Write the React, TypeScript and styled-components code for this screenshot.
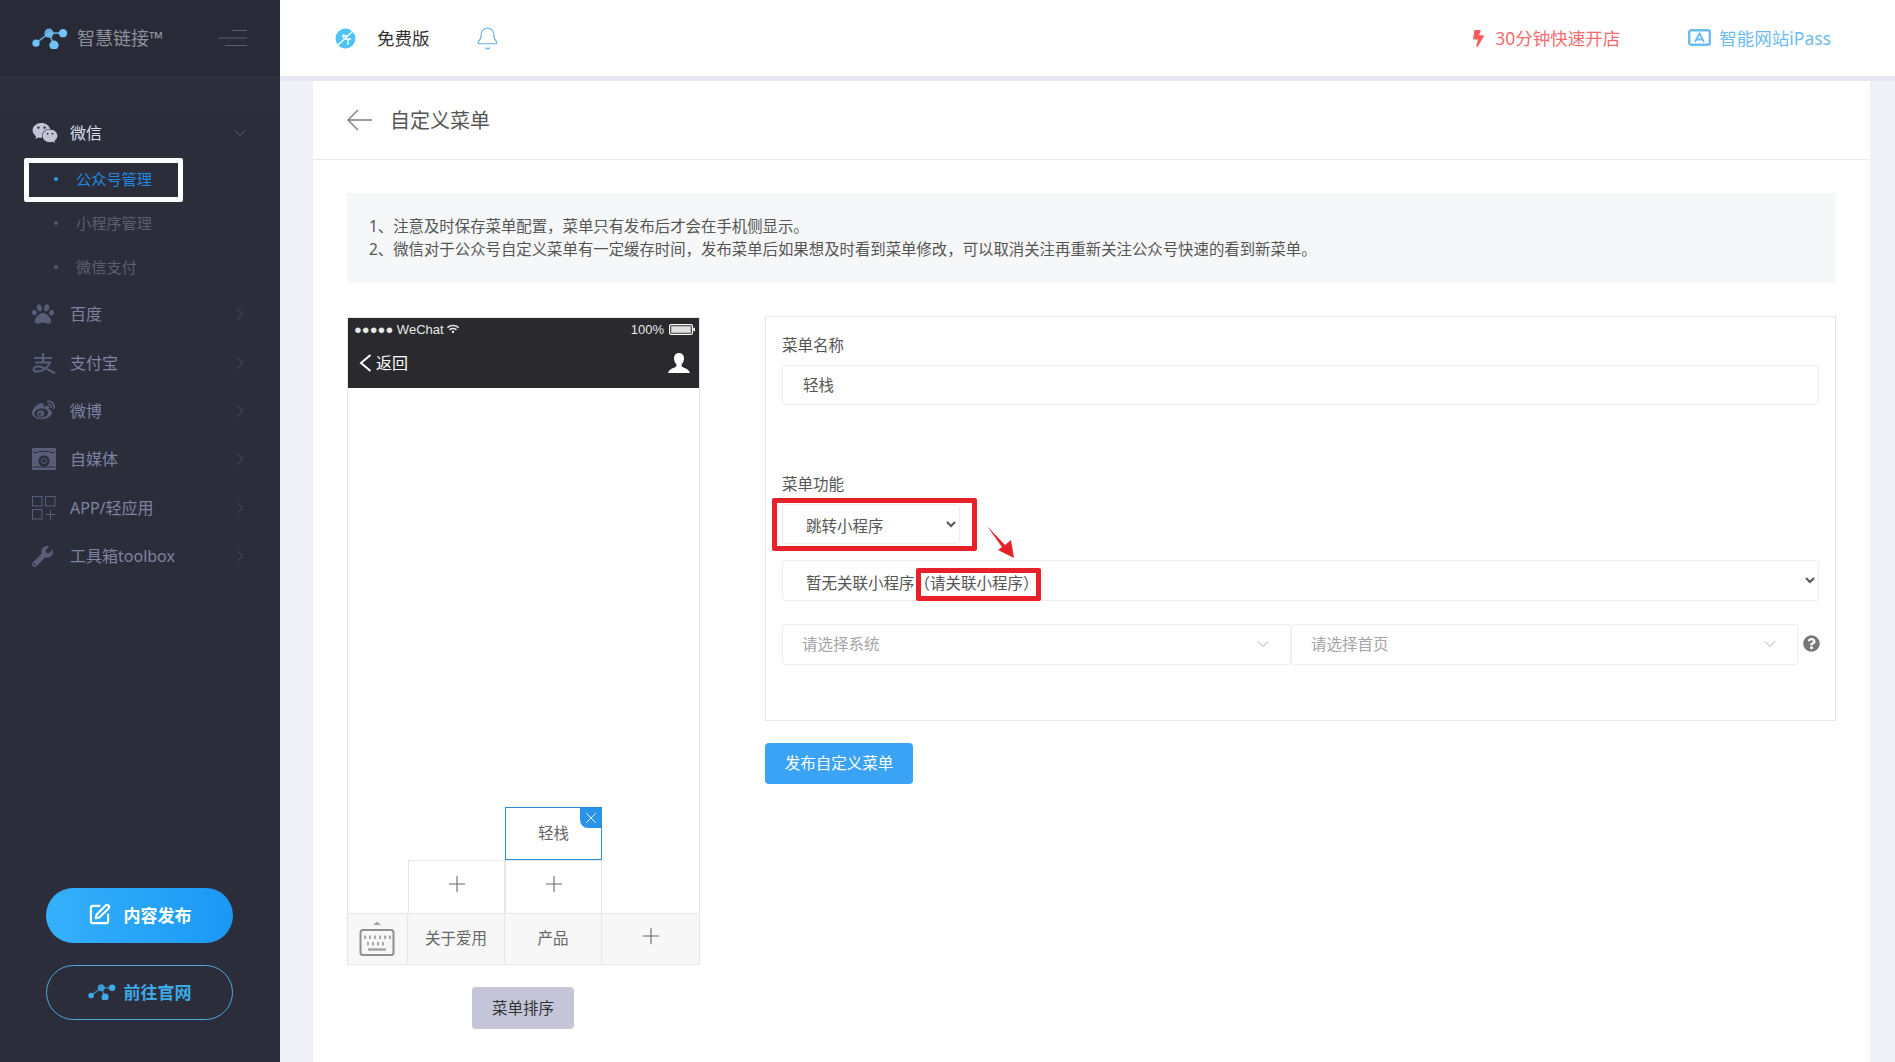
import styled, { createGlobalStyle } from 'styled-components';
import { Bell, ChevronDown, ChevronRight, Plus, SquarePen, X } from 'lucide-react';
import { FaBolt, FaPaw, FaQuestionCircle, FaWeibo, FaWeixin, FaWifi, FaWrench } from 'react-icons/fa';

const FONT = '"Noto Sans", "Noto Sans CJK SC", sans-serif';

const GlobalStyle = createGlobalStyle`
  html, body {
    margin: 0;
    padding: 0;
    height: 100%;
    overflow: hidden;
    font-family: ${FONT};
  }
  * { box-sizing: border-box; }
`;

const LogoMark = ({ color = '#6fc3f7', size = 36 }: { color?: string; size?: number }) => (
  <svg width={size} height={size * 0.62} viewBox="0 0 36 22" fill={color}>
    <path d="M4 16 L17 6 H30 M17 6 L22 18" stroke={color} strokeWidth="1.6" fill="none" opacity="0.8" />
    <circle cx="4" cy="16" r="3.6" />
    <circle cx="17" cy="6" r="4.6" opacity="0.85" />
    <circle cx="31" cy="6" r="4.2" />
    <circle cx="22" cy="18" r="4.6" />
  </svg>
);

const AlipayIcon = () => (
  <svg width="24" height="22" viewBox="0 0 24 22" fill="none" stroke="currentColor" strokeWidth="2.2">
    <path d="M2 6 H20 M11 1 V10 M3 10.5 H18 C15 17 9 20 3 19.5 C0 18 2 14 7 14.5 C12 15 17 18 23 21" />
  </svg>
);

const CameraIcon = () => (
  <svg width="24" height="22" viewBox="0 0 24 22" fill="currentColor">
    <path fillRule="evenodd" d="M1 0 H23 a1 1 0 0 1 1 1 V21 a1 1 0 0 1 -1 1 H1 a1 1 0 0 1 -1 -1 V1 a1 1 0 0 1 1 -1 Z M1.5 4 V5 H6 L7 3 H17 L18 5 H22.5 V4 Z M12 7.5 a5.5 5.5 0 1 0 0.01 0 Z M1 18.5 V19.5 H23 V18.5 Z" />
    <circle cx="12" cy="13" r="2.6" fill="none" stroke="currentColor" strokeWidth="1" />
  </svg>
);

const AppsIcon = () => (
  <svg width="24" height="24" viewBox="0 0 24 24" fill="none" stroke="currentColor" strokeWidth="1">
    <rect x="0.5" y="0.5" width="9.5" height="9.5" />
    <rect x="13.5" y="0.5" width="9.5" height="9.5" />
    <rect x="0.5" y="13.5" width="9.5" height="9.5" />
    <path d="M13.5 18.5 H23.5 M18.5 13.5 V23.5" />
  </svg>
);

const KeyboardIcon = () => (
  <svg width="36" height="36" viewBox="0 0 36 36" fill="none">
    <path d="M14 4 L18 0.5 L22 4 Z" fill="#a5a5a5" />
    <rect x="1.5" y="9" width="33" height="25" rx="2.5" stroke="#909090" strokeWidth="2" />
    <path d="M6 14.5 V18 M11 14.5 V18 M16 14.5 V18 M21 14.5 V18 M26 14.5 V18 M31 14.5 V18 M9 21 V24.5 M14 21 V24.5 M19 21 V24.5 M24 21 V24.5" stroke="#909090" strokeWidth="1.5" />
    <path d="M9 28.5 H27" stroke="#a5a5a5" strokeWidth="2.5" />
  </svg>
);

const FreeBadge = () => (
  <svg width="21" height="21" viewBox="0 0 21 21">
    <circle cx="10.5" cy="10.5" r="10" fill="#4fc3f7" />
    <path d="M3 17 L18 3" stroke="#fff" strokeWidth="1.4" />
    <path d="M7 8 H12 M9 6 L8 10 M10 11 H16 M13 11 V17" stroke="#fff" strokeWidth="1.3" fill="none" />
  </svg>
);

const ScreenIcon = () => (
  <svg width="23" height="18" viewBox="0 0 23 18" fill="none" stroke="#6cbcf3">
    <rect x="1.2" y="1.2" width="20.6" height="14.6" rx="2" strokeWidth="2.4" />
    <path d="M7 13 L11.5 4.5 L16 13 M8.5 10.5 H14.5" strokeWidth="1.8" />
  </svg>
);

const BackArrow = () => (
  <svg width="25" height="22" viewBox="0 0 25 22" fill="none" stroke="#7d7d7d" strokeWidth="1.4">
    <path d="M25 11 H1 M11 1 L1 11 L11 21" />
  </svg>
);

const Hamburger = () => (
  <svg width="29" height="16" viewBox="0 0 29 16" stroke="#5d5e70" strokeWidth="1">
    <path d="M14 0.5 H29 M0 8 H29 M7 15.5 H29" />
  </svg>
);

const PersonIcon = () => (
  <svg width="22" height="20" viewBox="0 0 22 20" fill="#fff">
    <path d="M11 0 C14.5 0 16 2.6 16 5.6 C16 8.2 14.8 10.2 13.6 11.4 C13.2 12.8 14 13.6 15.5 14.4 C18 15.6 21 16.4 22 20 H0 C1 16.4 4 15.6 6.5 14.4 C8 13.6 8.8 12.8 8.4 11.4 C7.2 10.2 6 8.2 6 5.6 C6 2.6 7.5 0 11 0 Z" />
  </svg>
);

const BatteryIcon = () => (
  <svg width="26" height="11" viewBox="0 0 26 11" fill="#fff">
    <rect x="0.6" y="0.6" width="22.8" height="9.8" rx="1.5" fill="none" stroke="#fff" strokeWidth="1.2" />
    <rect x="2.2" y="2.2" width="19.6" height="6.6" opacity="0.85" />
    <rect x="24.2" y="3.8" width="1.8" height="3.4" />
  </svg>
);

const navItems = [
  { label: '百度', icon: <FaPaw size={22} /> },
  { label: '支付宝', icon: <AlipayIcon /> },
  { label: '微博', icon: <FaWeibo size={23} /> },
  { label: '自媒体', icon: <CameraIcon /> },
  { label: 'APP/轻应用', icon: <AppsIcon /> },
  { label: '工具箱toolbox', icon: <FaWrench size={21} /> },
];

const subItems = ['公众号管理', '小程序管理', '微信支付'];

const App = () => {
  return (
    <Page>
      <GlobalStyle />
      <Sidebar>
        <Brand>
          <BrandLeft>
            <LogoMark />
            <BrandName>智慧链接™</BrandName>
          </BrandLeft>
          <Hamburger />
        </Brand>
        <SideBand />
        <NavRow $open>
          <NavIcon $open><FaWeixin size={26} /></NavIcon>
          <NavLabel $open>微信</NavLabel>
          <ChevronDown size={20} strokeWidth={1} />
        </NavRow>
        <SubList>
          {subItems.map((item, i) => (
            <SubItem key={item} $active={i === 0}>
              <SubDot $active={i === 0} />
              {item}
              {i === 0 && <WhiteMark />}
            </SubItem>
          ))}
        </SubList>
        {navItems.map((item) => (
          <NavRow key={item.label}>
            <NavIcon>{item.icon}</NavIcon>
            <NavLabel>{item.label}</NavLabel>
            <ChevronRight size={20} strokeWidth={1} />
          </NavRow>
        ))}
        <SideActions>
          <PublishPill>
            <SquarePen size={23} strokeWidth={2.2} />
            内容发布
          </PublishPill>
          <SitePill>
            <LogoMark color="#3da9e6" size={28} />
            前往官网
          </SitePill>
        </SideActions>
      </Sidebar>

      <Main>
        <TopBar>
          <TopLeft>
            <FreeBadge />
            <PlanName>免费版</PlanName>
            <BellSlot><Bell size={25} strokeWidth={1} color="#5fb0e6" /></BellSlot>
          </TopLeft>
          <TopRight>
            <TopLink $color="#f26d6d">
              <FaBolt size={17} color="#f9585c" />
              30分钟快速开店
            </TopLink>
            <TopLink $color="#6cbcf3">
              <ScreenIcon />
              智能网站iPass
            </TopLink>
          </TopRight>
        </TopBar>

        <Content>
          <Card>
            <CardHeader>
              <BackArrow />
              <CardTitle>自定义菜单</CardTitle>
            </CardHeader>
            <CardBody>
              <Notice>
                <div>1、注意及时保存菜单配置，菜单只有发布后才会在手机侧显示。</div>
                <div>2、微信对于公众号自定义菜单有一定缓存时间，发布菜单后如果想及时看到菜单修改，可以取消关注再重新关注公众号快速的看到新菜单。</div>
              </Notice>
              <Editor>
                <PhoneColumn>
                  <Phone>
                    <PhoneHead>
                      <StatusBar>
                        <StatusLeft>●●●●● WeChat <FaWifi size={12} /></StatusLeft>
                        <StatusRight>100% <BatteryIcon /></StatusRight>
                      </StatusBar>
                      <PhoneNav>
                        <BackLink>
                          <svg width="13" height="18" viewBox="0 0 13 18" fill="none" stroke="#fff" strokeWidth="2">
                            <path d="M11.5 1 L2 9 L11.5 17" />
                          </svg>
                          返回
                        </BackLink>
                        <PersonIcon />
                      </PhoneNav>
                    </PhoneHead>
                    <PhoneBody />
                    <SubGrid>
                      <ActiveSub>
                        <CellText>轻栈</CellText>
                        <CloseTag><X size={18} strokeWidth={1.2} /></CloseTag>
                      </ActiveSub>
                      <AddSub $col={2}><AddIcon /></AddSub>
                      <AddSub $col={3}><AddIcon /></AddSub>
                    </SubGrid>
                    <TabBar>
                      <KeyboardCell><KeyboardIcon /></KeyboardCell>
                      <TabCell><CellText>关于爱用</CellText></TabCell>
                      <TabCell><CellText>产品</CellText></TabCell>
                      <TabCell><AddIcon /></TabCell>
                    </TabBar>
                  </Phone>
                  <SortButton>菜单排序</SortButton>
                </PhoneColumn>

                <FormColumn>
                  <FormPanel>
                    <FieldLabel>菜单名称</FieldLabel>
                    <NameInput defaultValue="轻栈" />
                    <FunctionLabel>菜单功能</FunctionLabel>
                    <SelectWrap>
                      <TypeSelect defaultValue="mini">
                        <option value="mini">跳转小程序</option>
                      </TypeSelect>
                      <RedBox />
                      <RedArrow width="28" height="33" viewBox="0 0 28 33">
                        <polygon points="0,0 18,19 24,14 27,32 11,24 15,21" fill="#e8202a" />
                      </RedArrow>
                    </SelectWrap>
                    <LinkWrap>
                      <LinkSelect defaultValue="none">
                        <option value="none">暂无关联小程序（请关联小程序）</option>
                      </LinkSelect>
                      <RedHint />
                    </LinkWrap>
                    <PickerRow>
                      <Picker $wide>
                        请选择系统
                        <ChevronDown size={20} strokeWidth={1} color="#9a9a9a" />
                      </Picker>
                      <Picker>
                        请选择首页
                        <ChevronDown size={20} strokeWidth={1} color="#9a9a9a" />
                      </Picker>
                      <HelpSlot><FaQuestionCircle size={17} color="#777" /></HelpSlot>
                    </PickerRow>
                  </FormPanel>
                  <PublishButton>发布自定义菜单</PublishButton>
                </FormColumn>
              </Editor>
            </CardBody>
          </Card>
        </Content>
      </Main>
    </Page>
  );
};

export default App;

const Page = styled.div`
  display: flex;
  width: 100%;
  height: 100vh;
  overflow: hidden;
`;

const Sidebar = styled.aside`
  display: flex;
  flex-direction: column;
  flex: 0 0 280px;
  background: #2c2d3b;
`;

const Brand = styled.div`
  display: flex;
  align-items: center;
  justify-content: space-between;
  height: 76px;
  padding: 0 33px 0 32px;
  background: #292a37;
`;

const BrandLeft = styled.div`
  display: flex;
  align-items: center;
  gap: 9px;
`;

const BrandName = styled.div`
  font-size: 18px;
  line-height: 22px;
  color: #8f909d;
  white-space: nowrap;
`;

const SideBand = styled.div`
  height: 32px;
  background: #2e2f3d;
`;

const NavRow = styled.div<{ $open?: boolean }>`
  display: flex;
  align-items: center;
  height: ${(p) => (p.$open ? '48px' : '48.4px')};
  margin-top: ${(p) => (p.$open ? '1px' : '0')};
  padding: 0 30px 0 32px;
  color: ${(p) => (p.$open ? '#6a6b7e' : '#55566a')};
`;

const NavIcon = styled.span<{ $open?: boolean }>`
  display: flex;
  align-items: center;
  justify-content: flex-start;
  width: 38px;
  color: ${(p) => (p.$open ? '#c3c5d6' : '#5a5c78')};
`;

const NavLabel = styled.span<{ $open?: boolean }>`
  flex: 1;
  font-size: 16px;
  line-height: 22px;
  color: ${(p) => (p.$open ? '#dcdeee' : '#7f82a0')};
`;

const SubList = styled.div`
  display: flex;
  flex-direction: column;
  padding-bottom: 1px;
`;

const SubItem = styled.div<{ $active?: boolean }>`
  position: relative;
  display: flex;
  align-items: center;
  height: 44px;
  padding-left: 54px;
  font-size: 15.2px;
  line-height: 22px;
  color: ${(p) => (p.$active ? '#2389e0' : '#5c5d6f')};
`;

const SubDot = styled.i<{ $active?: boolean }>`
  width: 4px;
  height: 4px;
  margin-right: 18px;
  border-radius: 50%;
  background: ${(p) => (p.$active ? '#2a9bf0' : '#55566a')};
`;

const WhiteMark = styled.span`
  position: absolute;
  left: 24px;
  top: 1px;
  width: 159px;
  height: 44px;
  border: 5px solid #fff;
  border-radius: 2px;
`;

const SideActions = styled.div`
  display: flex;
  flex-direction: column;
  gap: 22px;
  margin-top: auto;
  padding: 0 47px 42px 46px;
`;

const PublishPill = styled.button`
  display: flex;
  align-items: center;
  justify-content: center;
  gap: 13px;
  height: 55px;
  padding: 0 0 2px;
  border: 0;
  border-radius: 28px;
  background: linear-gradient(90deg, #35b0fb, #1b98f5);
  color: #fff;
  font: bold 17px ${FONT};
`;

const SitePill = styled.button`
  display: flex;
  align-items: center;
  justify-content: center;
  gap: 8px;
  height: 55px;
  padding: 0 0 2px;
  border: 1px solid #4ea8da;
  border-radius: 28px;
  background: transparent;
  color: #3da9e6;
  font: bold 17px ${FONT};
`;

const Main = styled.main`
  display: flex;
  flex-direction: column;
  flex: 1;
  min-width: 0;
`;

const TopBar = styled.header`
  display: flex;
  align-items: center;
  justify-content: space-between;
  flex: 0 0 76px;
  padding: 0 64px 0 55px;
  background: #fff;
`;

const TopLeft = styled.div`
  display: flex;
  align-items: center;
`;

const PlanName = styled.span`
  margin-left: 21px;
  font-size: 17.5px;
  line-height: 24px;
  color: #333;
`;

const BellSlot = styled.span`
  display: flex;
  margin-left: 45px;
`;

const TopRight = styled.div`
  display: flex;
  align-items: center;
  gap: 68px;
`;

const TopLink = styled.a<{ $color: string }>`
  display: flex;
  align-items: center;
  gap: 8px;
  font-size: 17.5px;
  line-height: 24px;
  color: ${(p) => p.$color};
`;

const Content = styled.div`
  flex: 1;
  min-height: 0;
  padding: 0 25px 0 33px;
  border-top: 5px solid #e6e7f3;
  background: #f0f1f8;
`;

const Card = styled.section`
  height: 100%;
  background: #fff;
`;

const CardHeader = styled.div`
  display: flex;
  align-items: center;
  gap: 18px;
  height: 79px;
  padding-left: 34px;
  border-bottom: 1px solid #e9e9ee;
`;

const CardTitle = styled.h1`
  margin: 0;
  padding-top: 2px;
  font-size: 20px;
  font-weight: 400;
  line-height: 26px;
  color: #555;
`;

const CardBody = styled.div`
  padding: 33px 34px 0 34px;
`;

const Notice = styled.div`
  display: flex;
  flex-direction: column;
  justify-content: center;
  height: 90px;
  padding-left: 22px;
  background: #f6f7f9;
  font-size: 15.4px;
  line-height: 23px;
  color: #555;
`;

const Editor = styled.div`
  display: flex;
  margin-top: 33px;
`;

const PhoneColumn = styled.div`
  display: flex;
  flex-direction: column;
  align-items: center;
  flex: 0 0 353px;
  margin-right: 65px;
  padding-top: 1px;
`;

const Phone = styled.div`
  display: flex;
  flex-direction: column;
  width: 100%;
  height: 648px;
  border: 1px solid #e6e6e6;
`;

const PhoneHead = styled.div`
  display: flex;
  flex-direction: column;
  height: 70px;
  padding: 0 4px 0 6px;
  background: #2a2a2e;
  color: #fff;
`;

const StatusBar = styled.div`
  display: flex;
  align-items: center;
  justify-content: space-between;
  height: 22px;
  font: 13px "Liberation Sans", sans-serif;
  color: #e8e8e8;
`;

const StatusLeft = styled.div`
  display: flex;
  align-items: center;
  gap: 3px;
`;

const StatusRight = styled.div`
  display: flex;
  align-items: center;
  gap: 5px;
`;

const PhoneNav = styled.div`
  display: flex;
  align-items: center;
  justify-content: space-between;
  flex: 1;
  padding: 0 5px 2px 5px;
`;

const BackLink = styled.div`
  display: flex;
  align-items: center;
  gap: 4px;
  font-size: 16px;
  line-height: 20px;
`;

const PhoneBody = styled.div`
  flex: 1;
`;

const SubGrid = styled.div`
  display: grid;
  grid-template-columns: 60px repeat(3, 97px);
  grid-template-rows: 53px 53px;
`;

const CellText = styled.span`
  padding-bottom: 2px;
  font-size: 15.5px;
  line-height: 20px;
  color: #666;
`;

const AddIcon = styled(Plus).attrs({ size: 26, strokeWidth: 1 })`
  margin-bottom: 6px;
  color: #666;
`;

const ActiveSub = styled.div`
  position: relative;
  display: flex;
  align-items: center;
  justify-content: center;
  grid-column: 3;
  grid-row: 1;
  border: 1px solid #2a8fd8;
`;

const CloseTag = styled.span`
  position: absolute;
  top: 0;
  right: 0;
  display: flex;
  align-items: center;
  justify-content: center;
  width: 21px;
  height: 20px;
  border-bottom-left-radius: 8px;
  background: #2a94e8;
  color: #fff;
`;

const AddSub = styled.div<{ $col: number }>`
  display: flex;
  align-items: center;
  justify-content: center;
  grid-column: ${(p) => p.$col};
  grid-row: 2;
  border-left: 1px solid #e6e6e6;
  border-right: 1px solid #e6e6e6;
  border-top: 1px solid #e6e6e6;
`;

const TabBar = styled.div`
  display: grid;
  grid-template-columns: 60px repeat(3, 97px);
  height: 51px;
  border-top: 1px solid #e6e6e6;
  background: #f7f7f7;
`;

const TabCell = styled.div`
  display: flex;
  align-items: center;
  justify-content: center;
  border-right: 1px solid #e6e6e6;

  &:last-child {
    border-right: 0;
  }
`;

const KeyboardCell = styled(TabCell)`
  padding-right: 1px;
`;

const SortButton = styled.button`
  width: 102px;
  height: 42px;
  margin: 22px 1px 0 0;
  padding: 0;
  border: 0;
  border-radius: 4px;
  background: #c4c5d8;
  color: #333;
  font: 15.5px/20px ${FONT};
`;

const FormColumn = styled.div`
  flex: 1;
  min-width: 0;
`;

const FormPanel = styled.div`
  height: 405px;
  padding: 18px 16px 0 16px;
  border: 1px solid #e6e6e6;
`;

const FieldLabel = styled.div`
  height: 20px;
  font-size: 15.5px;
  line-height: 20px;
  color: #555;
`;

const FunctionLabel = styled(FieldLabel)`
  margin-top: 69px;
`;

const NameInput = styled.input`
  display: block;
  width: 100%;
  height: 40px;
  margin-top: 10px;
  padding: 0 20px 2px;
  border: 1px solid #eee;
  border-radius: 3px;
  outline: none;
  font: 15.5px ${FONT};
  color: #555;
`;

const SelectWrap = styled.div`
  position: relative;
  width: 178px;
  margin-top: 10px;
`;

const TypeSelect = styled.select`
  display: block;
  width: 100%;
  height: 40px;
  padding: 3px 19px 0;
  border: 1px solid #eee;
  border-radius: 3px;
  background: #fff;
  font: 15.5px ${FONT};
  color: #555;
`;

const RedBox = styled.span`
  position: absolute;
  top: -6px;
  left: -10px;
  right: -17px;
  bottom: -7px;
  border: 5px solid #e8202a;
  border-radius: 2px;
  pointer-events: none;
`;

const RedArrow = styled.svg`
  position: absolute;
  top: 22px;
  left: 205px;
`;

const LinkWrap = styled.div`
  position: relative;
  margin-top: 16px;
`;

const LinkSelect = styled(TypeSelect)`
  height: 41px;
  padding-top: 4px;
`;

const RedHint = styled.span`
  position: absolute;
  top: 8px;
  left: 134px;
  width: 125px;
  height: 33px;
  border: 5px solid #e8202a;
  border-radius: 2px;
  pointer-events: none;
`;

const PickerRow = styled.div`
  display: flex;
  margin-top: 23px;
`;

const Picker = styled.div<{ $wide?: boolean }>`
  display: flex;
  align-items: center;
  justify-content: space-between;
  flex: 0 0 ${(p) => (p.$wide ? '509px' : '507px')};
  height: 41px;
  padding: 0 17px 2px 19px;
  border: 1px solid #eee;
  border-radius: 3px;
  font-size: 15.5px;
  color: #a5a5a5;
`;

const HelpSlot = styled.span`
  display: flex;
  align-items: center;
  margin: 0 0 2px 5px;
`;

const PublishButton = styled.button`
  display: block;
  width: 148px;
  height: 41px;
  margin-top: 22px;
  padding: 0 0 2px;
  border: 0;
  border-radius: 4px;
  background: #3ba3f5;
  color: #fff;
  font: 15.5px/20px ${FONT};
`;
